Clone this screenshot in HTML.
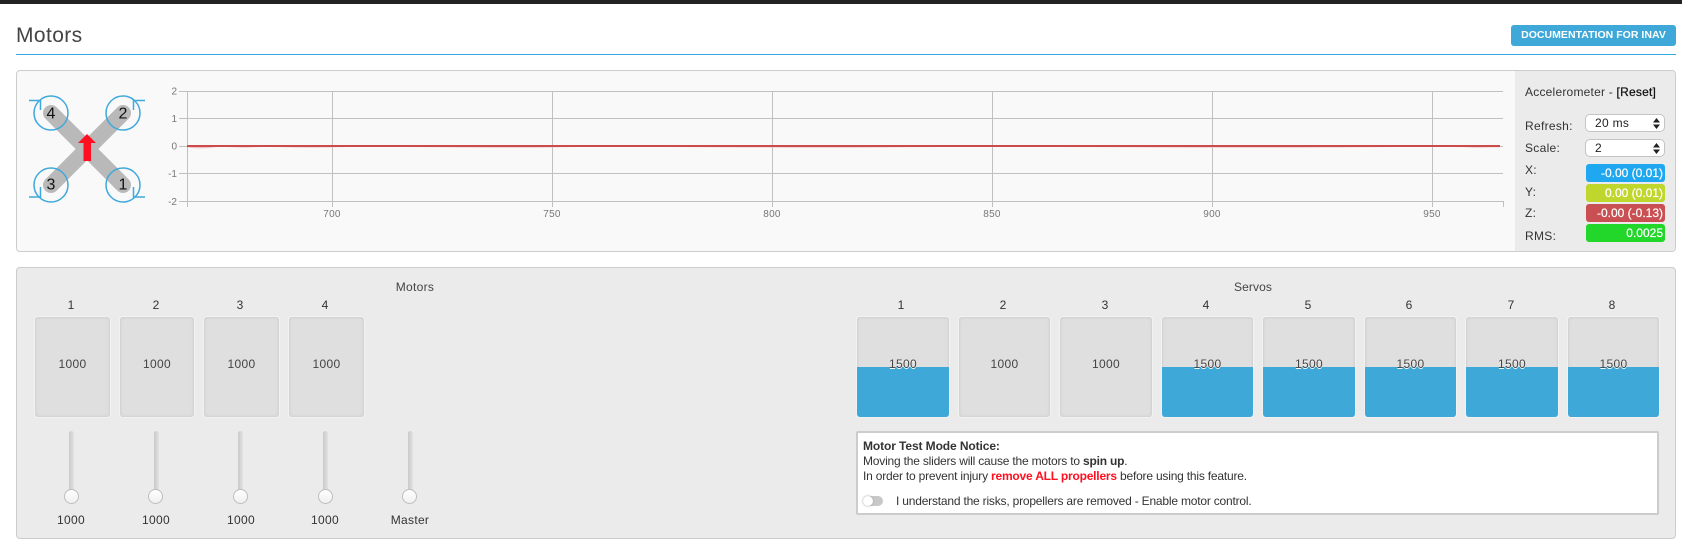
<!DOCTYPE html>
<html><head><meta charset="utf-8"><style>
html,body{margin:0;padding:0;background:#fff;width:1682px;height:554px;overflow:hidden}
body{position:relative;font-family:"Liberation Sans",sans-serif;font-size:12px;color:#333}
.a{position:absolute;white-space:nowrap}
.c{position:absolute;white-space:nowrap;transform:translateX(-50%);line-height:14px}
.t{position:absolute;white-space:nowrap;line-height:14px;letter-spacing:.3px}
.n{font-size:12px;letter-spacing:-.2px}
.box{position:absolute;top:317px;height:100px;background:#dfdfdf;border-radius:3px;box-shadow:inset 0 0 3px #c4c4c4,0 0 0 1px #f2f2f2;overflow:hidden}
.fill{position:absolute;left:0;right:0;bottom:0;height:50px;background:#3ea8d9}
.val{position:absolute;left:0;right:0;top:39px;text-align:center;line-height:16px;color:#444;letter-spacing:.3px}
.fv{color:#444;text-shadow:0 1px 0 #fff}
.tr{position:absolute;top:431px;width:5px;height:62px;background:linear-gradient(90deg,#c9c9c9,#e2e2e2);border-radius:3px 3px 0 0}
.th{position:absolute;top:489px;width:13px;height:13px;border:1px solid #bdbdbd;border-radius:50%;background:linear-gradient(#fff,#f0f0f0)}
.sel{position:absolute;left:1585px;width:78px;height:16px;background:#fff;border:1px solid #c4c4c4;border-radius:5px;line-height:17px;color:#222;text-indent:9px;letter-spacing:.3px}
.sel svg{position:absolute;right:4px;top:3px}
.bar{position:absolute;left:1586px;width:79px;height:18px;border-radius:3px;color:#fff;text-align:right;line-height:19px;font-size:12px;box-sizing:border-box;padding-right:2px;font-weight:400;-webkit-text-stroke:.2px #fff}
</style></head><body>
<div class="a" style="left:0;top:0;width:1682px;height:4px;background:#222"></div>
<div class="a" style="left:16px;top:22px;font-size:21px;line-height:28px;color:#444;letter-spacing:.4px">Motors</div>
<div class="a" style="left:16px;top:54px;width:1660px;height:1px;background:#37a8db"></div>
<div class="a" style="left:1511px;top:25px;width:165px;height:21px;background:#3ea8d9;border-radius:3px;color:#fff;font-weight:700;font-size:10.5px;line-height:21px;text-align:center;letter-spacing:.03px">DOCUMENTATION FOR INAV</div>

<div class="a" style="left:16px;top:70px;width:1658px;height:180px;background:#f9f9f9;border:1px solid #ccc;border-radius:4px;overflow:hidden">
  <div class="a" style="left:1498px;top:0;width:160px;height:180px;background:#ebebeb"></div>
</div>

<svg class="a" style="left:0;top:0" width="1682" height="260" xmlns="http://www.w3.org/2000/svg">
  <g stroke="#b9b9b9" stroke-width="16" stroke-linecap="round">
    <line x1="51" y1="113" x2="123" y2="185"/><line x1="123" y1="113" x2="51" y2="185"/>
  </g>
  <g fill="none" stroke="#3fa9dc" stroke-width="1.5">
    <circle cx="51" cy="113" r="17"/><circle cx="123" cy="113" r="17"/>
    <circle cx="51" cy="185" r="17"/><circle cx="123" cy="185" r="17"/>
    <path d="M29 100.5H40.5V110"/><path d="M145 100.5H133.5V110"/>
    <path d="M29 197H40.5V187"/><path d="M145 197H133.5V187"/>
  </g>
  <g font-family="Liberation Sans,sans-serif" font-size="16" fill="#111" text-anchor="middle">
    <text x="51" y="118.5">4</text><text x="123" y="118.5">2</text><text x="51" y="189.5">3</text><text x="123" y="189.5">1</text>
  </g>
  <path d="M87 134L96 143H91V161H83.500V143H78Z" fill="#ff0f1f"/>
  <g stroke="#c0c0c0" stroke-width="1" fill="none">
    <path d="M179 91.500H1503M179 118.500H1503M179 146.500H1503M179 173.500H1503M179 201.500H1503"/>
    <path d="M187.500 91V207M332.500 91V207M552.500 91V207M772.500 91V207M992.500 91V207M1212.500 91V207M1432.500 91V207M1503.500 201V207"/>
  </g>
  <path d="M187 146.500C195 148 205 148 215 146.500S240 148 255 146.500S290 148 335 146.500S500 148 560 146.500S760 148 900 146.500S1200 148 1360 146.500S1440 148 1500 146.500" fill="none" stroke="#eec4c4" stroke-width="1.500"/>
  <line x1="187" y1="146" x2="1500" y2="146" stroke="#cc4b4b" stroke-width="2"/>
  <g font-family="Liberation Sans,sans-serif" font-size="10" fill="#777" text-anchor="end">
    <text x="177" y="94.500">2</text><text x="177" y="122">1</text><text x="177" y="149.500">0</text><text x="177" y="177">-1</text><text x="177" y="205">-2</text>
  </g>
  <g font-family="Liberation Sans,sans-serif" font-size="10" fill="#777" text-anchor="middle" letter-spacing=".3">
    <text x="332" y="217">700</text><text x="552" y="217">750</text><text x="772" y="217">800</text><text x="992" y="217">850</text><text x="1212" y="217">900</text><text x="1432" y="217">950</text>
  </g>
</svg>

<div class="t" style="left:1525px;top:85px;letter-spacing:.22px">Accelerometer - <span style="color:#111;-webkit-text-stroke:.25px #111">[Reset]</span></div>
<div class="t" style="left:1525px;top:119px">Refresh:</div>
<div class="t" style="left:1525px;top:141px">Scale:</div>
<div class="t" style="left:1525px;top:163px">X:</div>
<div class="t" style="left:1525px;top:185px">Y:</div>
<div class="t" style="left:1525px;top:206px">Z:</div>
<div class="t" style="left:1525px;top:229px">RMS:</div>
<div class="sel" style="top:114px">20 ms<svg width="7" height="11"><path d="M3.500 0L7 4.500H0ZM3.500 11L0 6.500H7Z" fill="#222"/></svg></div>
<div class="sel" style="top:139px">2<svg width="7" height="11"><path d="M3.500 0L7 4.500H0ZM3.500 11L0 6.500H7Z" fill="#222"/></svg></div>
<div class="bar" style="top:164px;background:#1fa8ef">-0.00 (0.01)</div>
<div class="bar" style="top:184px;background:#bfd62c">0.00 (0.01)</div>
<div class="bar" style="top:204px;background:#c94f52">-0.00 (-0.13)</div>
<div class="bar" style="top:224px;background:#22d62a">0.0025</div>

<div class="a" style="left:16px;top:267px;width:1658px;height:270px;background:#ebebeb;border:1px solid #ccc;border-radius:4px"></div>
<div class="c" style="left:415px;top:280px;letter-spacing:.3px;color:#444">Motors</div>
<div class="c" style="left:1253px;top:280px;letter-spacing:.1px;color:#444">Servos</div>

<div class="c" style="left:71px;top:298px">1</div><div class="c" style="left:156px;top:298px">2</div><div class="c" style="left:240px;top:298px">3</div><div class="c" style="left:325px;top:298px">4</div>
<div class="box" style="left:35px;width:75px"><div class="val">1000</div></div>
<div class="box" style="left:120px;width:74px"><div class="val">1000</div></div>
<div class="box" style="left:204px;width:75px"><div class="val">1000</div></div>
<div class="box" style="left:289px;width:75px"><div class="val">1000</div></div>

<div class="tr" style="left:69px"></div><div class="tr" style="left:154px"></div><div class="tr" style="left:238px"></div><div class="tr" style="left:323px"></div><div class="tr" style="left:408px"></div>
<div class="th" style="left:64px"></div><div class="th" style="left:148px"></div><div class="th" style="left:233px"></div><div class="th" style="left:318px"></div><div class="th" style="left:402px"></div>
<div class="c" style="left:71px;top:513px;letter-spacing:.3px">1000</div><div class="c" style="left:156px;top:513px;letter-spacing:.3px">1000</div><div class="c" style="left:241px;top:513px;letter-spacing:.3px">1000</div><div class="c" style="left:325px;top:513px;letter-spacing:.3px">1000</div><div class="c" style="left:410px;top:513px;letter-spacing:.3px">Master</div>

<div class="c" style="left:901px;top:298px">1</div><div class="c" style="left:1003px;top:298px">2</div><div class="c" style="left:1105px;top:298px">3</div><div class="c" style="left:1206px;top:298px">4</div><div class="c" style="left:1308px;top:298px">5</div><div class="c" style="left:1409px;top:298px">6</div><div class="c" style="left:1511px;top:298px">7</div><div class="c" style="left:1612px;top:298px">8</div>
<div class="box" style="left:857px;width:92px"><div class="fill"></div><div class="val fv">1500</div></div>
<div class="box" style="left:959px;width:91px"><div class="val">1000</div></div>
<div class="box" style="left:1060px;width:92px"><div class="val">1000</div></div>
<div class="box" style="left:1162px;width:91px"><div class="fill"></div><div class="val fv">1500</div></div>
<div class="box" style="left:1263px;width:92px"><div class="fill"></div><div class="val fv">1500</div></div>
<div class="box" style="left:1365px;width:91px"><div class="fill"></div><div class="val fv">1500</div></div>
<div class="box" style="left:1466px;width:92px"><div class="fill"></div><div class="val fv">1500</div></div>
<div class="box" style="left:1568px;width:91px"><div class="fill"></div><div class="val fv">1500</div></div>

<div class="a" style="left:856px;top:431px;width:799px;height:80px;background:#fff;border:2px solid #ccc;border-radius:2px"></div>
<div class="t n" style="left:863px;top:439px;letter-spacing:-.1px"><b>Motor Test Mode Notice:</b></div>
<div class="t n" style="left:863px;top:454px">Moving the sliders will cause the motors to <b>spin up</b>.</div>
<div class="t n" style="left:863px;top:469px">In order to prevent injury <b style="color:#ff0f1f">remove ALL propellers</b> before using this feature.</div>
<div class="a" style="left:863px;top:496px;width:20px;height:10px;background:#c8c8c8;border-radius:5px"></div>
<div class="a" style="left:863px;top:496px;width:10px;height:10px;background:#fff;border-radius:50%;box-shadow:0 0 2px #999"></div>
<div class="t n" style="left:896px;top:494px">I understand the risks, propellers are removed - Enable motor control.</div>
</body></html>
